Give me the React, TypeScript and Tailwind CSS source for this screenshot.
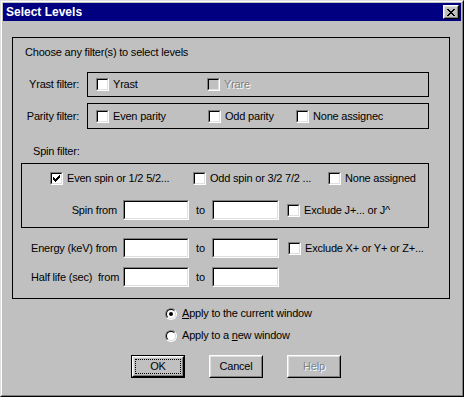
import React from "react";

// sunken 2px bevel used by checkboxes and edit fields
const sunkOuter = "border border-t-[#808080] border-l-[#808080] border-r-white border-b-white";
const sunkInner = "border border-t-black border-l-black border-r-[#dfdfdf] border-b-[#dfdfdf]";

const CheckMark = () => (
  <svg width="7" height="7" viewBox="0 0 7 7" shapeRendering="crispEdges" className="block ml-px mt-px">
    <rect x="6" y="0" width="1" height="3" fill="#000" />
    <rect x="5" y="1" width="1" height="3" fill="#000" />
    <rect x="4" y="2" width="1" height="3" fill="#000" />
    <rect x="3" y="3" width="1" height="3" fill="#000" />
    <rect x="2" y="4" width="1" height="3" fill="#000" />
    <rect x="1" y="3" width="1" height="3" fill="#000" />
    <rect x="0" y="2" width="1" height="3" fill="#000" />
  </svg>
);

function Check({ checked = false, disabled = false }: { checked?: boolean; disabled?: boolean }) {
  return (
    <span className={`block w-[13px] h-[13px] shrink-0 ${sunkOuter}`}>
      <span className={`block w-full h-full ${sunkInner} ${disabled ? "bg-[#c0c0c0]" : "bg-white"}`}>
        {checked && <CheckMark />}
      </span>
    </span>
  );
}

function CheckItem({ label, checked, disabled, width }: { label: string; checked?: boolean; disabled?: boolean; width?: string }) {
  return (
    <div className={`flex items-center gap-[4px] ${width ?? ""}`}>
      <Check checked={checked} disabled={disabled} />
      <span className={disabled ? "text-[#808080] [text-shadow:1px_1px_0_#fff]" : ""}>{label}</span>
    </div>
  );
}

function Field({ width }: { width: string }) {
  return (
    <div className={`h-[20px] ${width} ${sunkOuter}`}>
      <div className={`h-full bg-white ${sunkInner}`} />
    </div>
  );
}

function Radio({ on = false }: { on?: boolean }) {
  return (
    <span className="block w-[12px] h-[12px] rounded-full border border-t-[#808080] border-l-[#808080] border-r-white border-b-white">
      <span className="flex items-center justify-center w-full h-full rounded-full bg-white border border-t-black border-l-black border-r-[#dfdfdf] border-b-[#dfdfdf]">
        {on && <span className="block w-[4px] h-[4px] rounded-full bg-black" />}
      </span>
    </span>
  );
}

function Button({ label, isDefault, disabled }: { label: string; isDefault?: boolean; disabled?: boolean }) {
  const bevel = (
    <div className="h-full border border-t-white border-l-white border-r-black border-b-black">
      <div className="h-full flex items-center justify-center border border-t-[#dfdfdf] border-l-[#dfdfdf] border-r-[#808080] border-b-[#808080]">
        {isDefault ? (
          <span className="flex items-center justify-center w-[46px] h-[15px] border border-dotted border-black">{label}</span>
        ) : (
          <span className={disabled ? "text-[#808080] [text-shadow:1px_1px_0_#fff]" : ""}>{label}</span>
        )}
      </div>
    </div>
  );
  return (
    <div className={`w-[54px] h-[23px] ${isDefault ? "border border-black" : ""}`}>{bevel}</div>
  );
}

export default function App() {
  return (
    <div className="w-[464px] h-[397px] bg-[#c0c0c0] text-black text-[11px] leading-[13px] tracking-[-0.2px] font-['Liberation_Sans',Arial,sans-serif] border border-t-[#dfdfdf] border-l-[#dfdfdf] border-r-black border-b-black">
      <div className="h-full flex flex-col p-px border border-t-white border-l-white border-r-[#808080] border-b-[#808080]">
        {/* title bar */}
        <div className="h-[18px] bg-[#000080] flex items-center justify-between pl-[3px] pr-[2px] shrink-0">
          <span className="text-white font-bold text-[12px] tracking-normal">Select Levels</span>
          <div className="w-[16px] h-[14px] border border-t-white border-l-white border-r-black border-b-black">
            <div className="h-full flex items-center justify-center bg-[#c0c0c0] border border-t-[#dfdfdf] border-l-[#dfdfdf] border-r-[#808080] border-b-[#808080]">
              <svg width="8" height="7" viewBox="0 0 8 7" shapeRendering="crispEdges" className="block">
                <path d="M0 0h2v1H0zM6 0h2v1H6zM1 1h2v1H1zM5 1h2v1H5zM2 2h4v1H2zM3 3h2v1H3zM2 4h4v1H2zM1 5h2v1H1zM5 5h2v1H5zM0 6h2v1H0zM6 6h2v1H6z" fill="#000" />
              </svg>
            </div>
          </div>
        </div>

        {/* body */}
        <div className="flex-1 flex flex-col">
          <div className="ml-[9px] mt-[16px] w-[438px] h-[262px] border border-black flex flex-col">
            <div className="mt-[8px] pl-[12px]">Choose any filter(s) to select levels</div>

            <div className="mt-[13px] flex items-center">
              <div className="w-[74px] text-right pr-[8px]">Yrast filter:</div>
              <div className="w-[342px] h-[25px] border border-black flex items-center pl-[8px]">
                <CheckItem label="Yrast" width="w-[111px]" />
                <CheckItem label="Yrare" disabled />
              </div>
            </div>

            <div className="mt-[6px] flex items-center">
              <div className="w-[74px] text-right pr-[8px]">Parity filter:</div>
              <div className="w-[342px] h-[26px] border border-black flex items-center pl-[8px]">
                <CheckItem label="Even parity" width="w-[112px]" />
                <CheckItem label="Odd parity" width="w-[88px]" />
                <CheckItem label="None assignec" />
              </div>
            </div>

            <div className="mt-[16px] pl-[20px]">Spin filter:</div>

            <div className="mt-[5px] ml-[8px] w-[408px] h-[65px] border border-black flex flex-col">
              <div className="mt-[8px] flex items-center pl-[28px]">
                <CheckItem label="Even spin or 1/2 5/2..." checked width="w-[143px]" />
                <CheckItem label="Odd spin or 3/2 7/2 ..." width="w-[135px]" />
                <CheckItem label="None assigned" />
              </div>
              <div className="mt-[15px] flex items-center">
                <div className="w-[101px] text-right pr-[6px]">Spin from</div>
                <Field width="w-[66px]" />
                <div className="w-[23px] text-center">to</div>
                <Field width="w-[67px]" />
                <div className="ml-[8px]">
                  <CheckItem label="Exclude J+... or J^" />
                </div>
              </div>
            </div>

            <div className="mt-[10px] flex items-center">
              <div className="w-[110px] pl-[18px]">Energy (keV) from</div>
              <Field width="w-[66px]" />
              <div className="w-[23px] text-center">to</div>
              <Field width="w-[67px]" />
              <div className="ml-[9px]">
                <CheckItem label="Exclude X+ or Y+ or Z+..." />
              </div>
            </div>

            <div className="mt-[9px] flex items-center">
              <div className="w-[110px] pl-[18px] whitespace-pre">Half life (sec)  from</div>
              <Field width="w-[66px]" />
              <div className="w-[23px] text-center">to</div>
              <Field width="w-[67px]" />
            </div>
          </div>

          <div className="mt-[8px] pl-[162px] flex items-center gap-[5px]">
            <Radio on />
            <span><span className="underline">A</span>pply to the current window</span>
          </div>
          <div className="mt-[9px] pl-[162px] flex items-center gap-[5px]">
            <Radio />
            <span>Apply to a <span className="underline">n</span>ew window</span>
          </div>

          <div className="mt-[13px] pl-[128px] flex gap-[24px]">
            <Button label="OK" isDefault />
            <Button label="Cancel" />
            <Button label="Help" disabled />
          </div>
        </div>
      </div>
    </div>
  );
}
